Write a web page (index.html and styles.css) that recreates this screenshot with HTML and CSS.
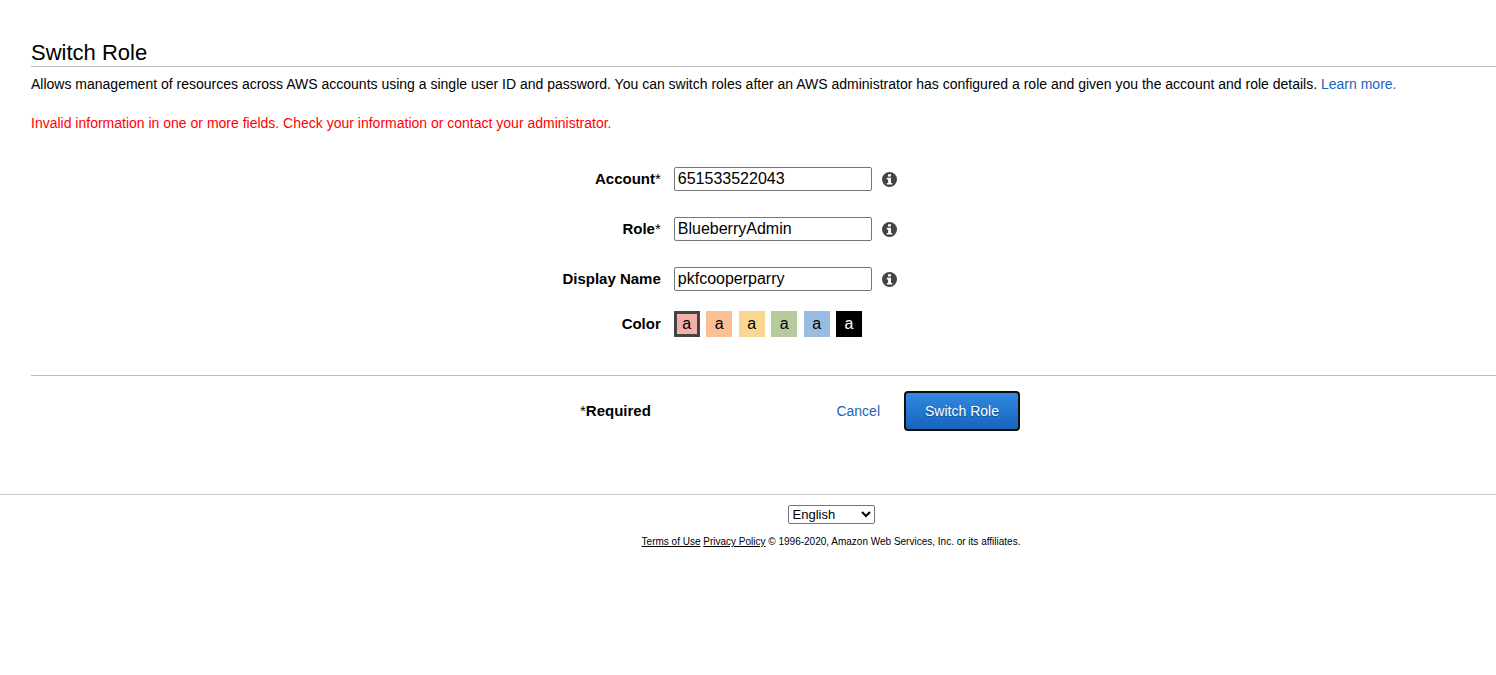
FILE: index.html
```html
<!DOCTYPE html>
<html lang="en">
<head>
<meta charset="utf-8">
<title>Switch Role</title>
<link rel="stylesheet" href="styles.css">
</head>
<body>
<svg class="sprite" aria-hidden="true">
  <symbol id="info" viewBox="0 0 14 14">
    <circle cx="7" cy="7" r="7" fill="#444"/>
    <path d="M5.6 2h2.8v2.3H5.6zM4.5 5.4h3.9v4.8h1.2v1.5H4.5v-1.5h1.2V6.9H4.5z" fill="#fff"/>
  </symbol>
</svg>
<main class="page">
  <h1 class="title">Switch Role</h1>
  <p class="intro">Allows management of resources across AWS accounts using a single user ID and password. You can switch roles after an AWS administrator has configured a role and given you the account and role details. <a class="link" href="#">Learn more.</a></p>
  <p class="error">Invalid information in one or more fields. Check your information or contact your administrator.</p>
  <form>
    <div class="fields">
      <div class="row">
        <label class="label" for="account">Account<span class="star">*</span></label>
        <input class="field" id="account" type="text" value="651533522043">
        <svg class="info"><use href="#info"/></svg>
      </div>
      <div class="row">
        <label class="label" for="role">Role<span class="star">*</span></label>
        <input class="field" id="role" type="text" value="BlueberryAdmin">
        <svg class="info"><use href="#info"/></svg>
      </div>
      <div class="row">
        <label class="label" for="display">Display Name</label>
        <input class="field" id="display" type="text" value="pkfcooperparry">
        <svg class="info"><use href="#info"/></svg>
      </div>
      <div class="row row-color" role="radiogroup" aria-labelledby="color-label">
        <span class="label" id="color-label">Color</span>
        <div class="swatches">
          <label class="swatch red"><input type="radio" name="color" checked>a</label>
          <label class="swatch orange"><input type="radio" name="color">a</label>
          <label class="swatch yellow"><input type="radio" name="color">a</label>
          <label class="swatch green"><input type="radio" name="color">a</label>
          <label class="swatch blue"><input type="radio" name="color">a</label>
          <label class="swatch black"><input type="radio" name="color">a</label>
        </div>
      </div>
    </div>
    <div class="actions">
      <span class="required"><span class="star">*</span>Required</span>
      <a class="link cancel" href="#">Cancel</a>
      <button class="submit" type="submit">Switch Role</button>
    </div>
  </form>
</main>
<footer class="footer">
  <select class="language" aria-label="Language"><option>English</option></select>
  <p class="legal"><a href="#">Terms of Use</a> <a href="#">Privacy Policy</a> © 1996-2020, Amazon Web Services, Inc. or its affiliates.</p>
</footer>
</body>
</html>
```
FILE: styles.css
```css
* { box-sizing: border-box; }
body {
  margin: 0;
  background: #fff;
  color: #000;
  font: 14px/20px "Liberation Sans", Arial, sans-serif;
}
.sprite { position: absolute; width: 0; height: 0; }
.page { padding: 40px 0 0 31px; }
.title {
  margin: 0;
  border-bottom: 1px solid #bbb;
  font-size: 22px;
  line-height: 26px;
  font-weight: 400;
}
.intro { margin: 7px 0 0; }
.error { margin: 19px 0 0; color: #f00; }
.link { color: #1b63be; text-decoration: none; }
.fields {
  display: flex;
  flex-direction: column;
  gap: 26px;
  padding: 34px 0 38px 5px;
}
.row {
  display: grid;
  grid-template-columns: 43% 198px 15px;
  column-gap: 10px;
  align-items: center;
}
.row-color { grid-template-columns: 43% 200px; margin-top: -6px; }
.label {
  padding-right: 3px;
  text-align: right;
  font-size: 15px;
  font-weight: 700;
}
.star { font-weight: 400; }
.field {
  width: 100%;
  height: 24px;
  padding: 1px 3px 2px;
  border: 1px solid #767676;
  border-radius: 2px;
  font: 16px "Liberation Sans", Arial, sans-serif;
}
.info { display: block; width: 15px; height: 15px; }
.swatches { height: 26px; font-size: 16px; white-space: nowrap; }
.swatch {
  display: inline-block;
  width: 26px;
  height: 26px;
  margin-right: 2px;
  line-height: 26px;
  text-align: center;
  vertical-align: top;
}
.swatch input { position: absolute; opacity: 0; margin: 0; }
.swatch:has(:checked) { box-shadow: inset 0 0 0 3px #444; }
.red { background: #f2b0a9; }
.orange { background: #fbbf93; }
.yellow { background: #fad791; }
.green { background: #b7ca9d; }
.blue { background: #99bce3; }
.black { background: #000; color: #fff; }
.actions {
  display: grid;
  grid-template-columns: 72px 228px 116px;
  column-gap: 12px;
  justify-content: center;
  align-items: center;
  padding: 15px 0 63px 73px;
  border-top: 1px solid #bbb;
}
.required { font-size: 15px; font-weight: 700; }
.cancel { padding-right: 12px; text-align: right; }
.submit {
  height: 40px;
  padding: 0;
  border: 2px solid #101010;
  border-radius: 4px;
  background: linear-gradient(#3289e0, #1564be);
  color: #fff;
  font: 14px "Liberation Sans", Arial, sans-serif;
  text-shadow: 0 1px 1px #0f4a91;
}
.footer {
  display: flex;
  flex-direction: column;
  align-items: center;
  padding: 10px 0 0 166px;
  border-top: 1px solid #ccc;
}
.language {
  width: 87px;
  height: 19px;
  padding: 0;
  border: 1px solid #767676;
  border-radius: 2px;
  background: #fff;
  font: 13px "Liberation Sans", Arial, sans-serif;
}
.legal { margin: 8px 0 0; font-size: 10px; }
.legal a { color: #000; }
```
